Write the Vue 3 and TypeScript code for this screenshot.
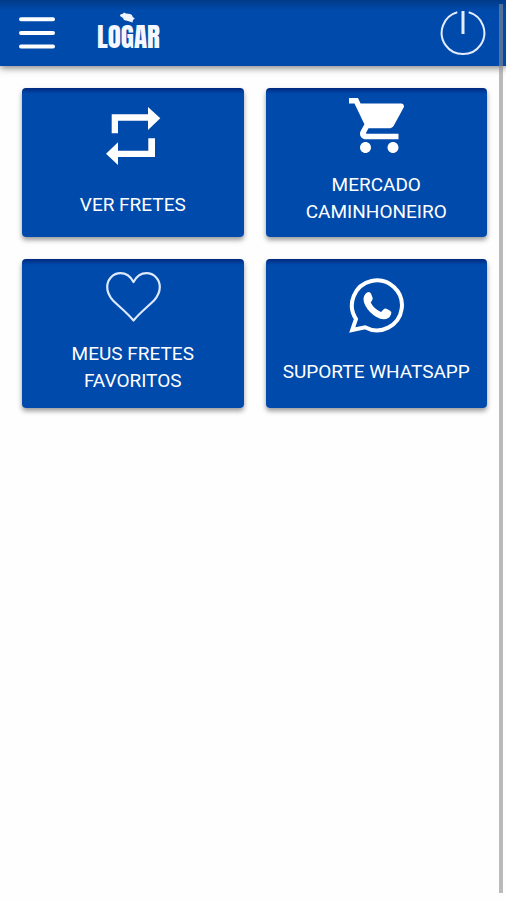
<script setup lang="ts">
type IconName = 'repeat' | 'cart' | 'heart' | 'whatsapp'

interface MenuItem {
  label: string
  icon: IconName
}

const items: MenuItem[] = [
  { label: 'VER FRETES', icon: 'repeat' },
  { label: 'MERCADO CAMINHONEIRO', icon: 'cart' },
  { label: 'MEUS FRETES FAVORITOS', icon: 'heart' },
  { label: 'SUPORTE WHATSAPP', icon: 'whatsapp' },
]
</script>

<template>
  <div class="app">
    <header class="bar">
      <button class="menu" type="button" aria-label="Menu">
        <svg width="38" height="34" viewBox="0 0 38 34" fill="none" stroke="#fff" stroke-width="4" stroke-linecap="round">
          <path d="M3 3.300H35M3 17H35M3 30.500H35" />
        </svg>
      </button>
      <a class="logo" href="#" aria-label="LOGAR">
        <svg class="mark" width="18" height="11" viewBox="0 0 18 11" fill="#f0f4ff">
          <path d="M1 4Q1 1.500 3.500 2L5 .5 7 1.500 11 2Q13.500 2.500 13.800 5L15.800 6.500 14 8 13.500 10.500 10.500 9.500 5 8 4 6Z" />
        </svg>
        <span class="name">LOGAR</span>
      </a>
      <button class="power" type="button" aria-label="Sair">
        <svg width="46" height="46" viewBox="0 0 46 46" fill="none" stroke="#e4eeff">
          <path d="M17.300 2.300A21.300 21.300 0 1 0 28.700 2.300" stroke-width="2" />
          <path d="M23 1V24" stroke-width="3" />
        </svg>
      </button>
    </header>

    <main class="grid">
      <button v-for="item in items" :key="item.icon" class="card" :class="item.icon" type="button">
        <svg v-if="item.icon === 'repeat'" width="56" height="60" viewBox="-1 0 56 60" fill="#fff">
          <path d="M5.700 8.300H42V1L54.300 12.300 42 24V14.700H12V27.300H5.700Z" />
          <path d="M49 32.300V51H12V59L0 47.700 12 36.300V44.700H42.300V32.300Z" />
        </svg>
        <svg v-else-if="item.icon === 'cart'" width="55" height="55" viewBox="1 2 20 20" fill="#fff">
          <path d="M7 18c-1.100 0-1.990.9-1.990 2S5.900 22 7 22s2-.9 2-2-.9-2-2-2zM1 2v2h2l3.600 7.590-1.350 2.450c-.16.280-.25.610-.25.960 0 1.100.9 2 2 2h12v-2H7.420c-.14 0-.25-.11-.25-.25l.03-.12.900-1.630h7.450c.75 0 1.410-.41 1.750-1.030l3.580-6.490c.08-.14.120-.31.120-.48 0-.55-.45-1-1-1H5.210l-.94-2H1zm16 16c-1.100 0-1.990.9-1.990 2s.89 2 1.990 2 2-.9 2-2-.9-2-2-2z" />
        </svg>
        <svg v-else-if="item.icon === 'heart'" width="56" height="50" viewBox="-1 0 56 50" fill="none" stroke="#dce9ff" stroke-width="2.200" stroke-linejoin="round">
          <path d="M27.500 10C24.500 4.500 20 1.200 14.500 1.200C7 1.200 1.200 7.500 1.200 15C1.200 20 3 24 7 28.500C14 35.500 20.500 40 27.500 48.500C34.500 40 41 35.500 48 28.500C52 24 53.800 20 53.800 15C53.800 7.500 48 1.200 40.500 1.200C35 1.200 30.500 4.500 27.500 10Z" />
        </svg>
        <svg v-else width="55" height="55" viewBox="0 0 55 55">
          <path d="M7 41A25 25 0 1 1 16 49.300L3.200 52Z" fill="none" stroke="#fff" stroke-width="4" />
          <path d="M18 14.500Q20.500 13 22 15.500L23.700 20Q24 22 21.700 24.500 25 31 32 34L34.500 31.500Q36 30 38 31L41.500 33Q43 34 42 36.500 40 41.500 34.500 41.300 28 41 21 34 14.500 27 14.500 21 14.800 16.500 18 14.500Z" fill="#fff" />
        </svg>
        <span class="label">{{ item.label }}</span>
      </button>
    </main>
    <div class="scroll" aria-hidden="true"></div>
  </div>
</template>

<style>
body {
  margin: 0;
  background: #fefefe;
}
</style>

<style scoped>
.app {
  position: relative;
  min-height: 100vh;
  font-family: Roboto, "Liberation Sans", sans-serif;
}

.bar {
  display: flex;
  align-items: center;
  height: 66px;
  padding: 0 20px 0 18px;
  box-sizing: border-box;
  background: linear-gradient(#003a88, #004aab 10px);
  box-shadow: 0 2px 7px rgba(0, 0, 0, 0.5);
}

button {
  margin: 0;
  padding: 0;
  border: 0;
  background: none;
  color: #fff;
  font: inherit;
  cursor: pointer;
}

svg {
  display: block;
  flex: none;
}

.logo {
  display: flex;
  flex-direction: column;
  align-items: center;
  margin-left: 41px;
  padding-bottom: 4px;
  color: #f4f7ff;
  text-decoration: none;
}

.name {
  font-family: Anton, "Liberation Sans Narrow", Roboto, sans-serif;
  font-size: 27px;
  line-height: 28px;
  font-weight: 400;
}

.power {
  margin-left: auto;
}

.grid {
  display: grid;
  grid-template-columns: 1fr 1fr;
  gap: 22px;
  padding: 22px 19px 22px 22px;
}

.card {
  display: flex;
  flex-direction: column;
  align-items: center;
  justify-content: center;
  gap: 25px;
  min-height: 149px;
  padding: 0 12px 4px;
  border-radius: 4px;
  background: linear-gradient(#00297f, #004aab 6px);
  box-shadow: 0 3px 5px rgba(0, 0, 0, 0.4);
}

.repeat {
  padding-bottom: 2px;
}

.cart,
.heart {
  gap: 18px;
  padding: 0 36px 2px;
}

.label {
  font-size: 19px;
  line-height: 27px;
}

.scroll {
  position: absolute;
  top: 4px;
  right: 3px;
  bottom: 7px;
  width: 4px;
  background: rgba(140, 140, 140, 0.6);
}
</style>
